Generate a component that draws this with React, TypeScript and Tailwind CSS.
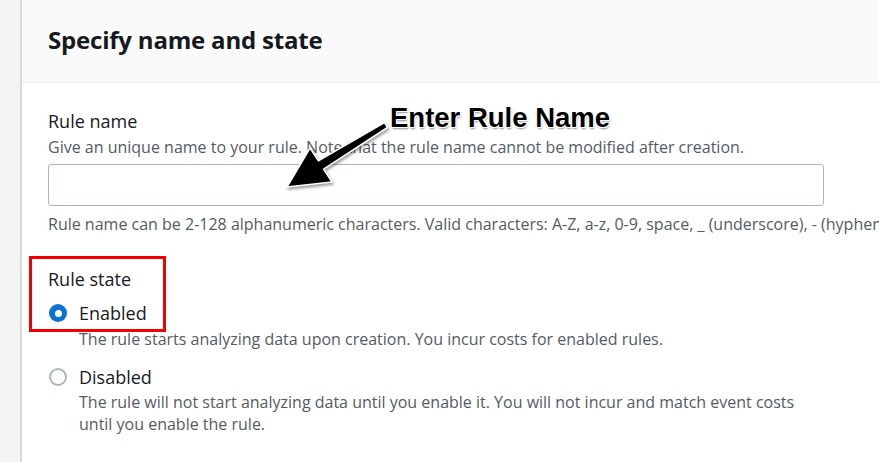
import React from 'react';

const font = { fontFamily: '"Open Sans", "Noto Sans", Arial, sans-serif' };

function Radio({ checked }: { checked: boolean }) {
  if (checked) {
    return (
      <span className="flex h-[18px] w-[18px] shrink-0 items-center justify-center rounded-full bg-[#0972d3]">
        <span className="h-[7px] w-[7px] rounded-full bg-white" />
      </span>
    );
  }
  return <span className="h-[18px] w-[18px] shrink-0 rounded-full border-2 border-[#aab7b8] bg-white" />;
}

export default function App() {
  return (
    <div className="relative flex h-[462px] w-[879px] overflow-hidden bg-[#f2f3f3]" style={font}>
      <div className="w-[20px] shrink-0" />
      <div className="flex min-w-0 flex-1 flex-col border-l-2 border-[#d5dbdb] bg-white">
        {/* header */}
        <div className="flex h-[83px] shrink-0 items-center border-b border-[#eaeded] bg-[#fafafa] pb-[2px] pl-[26px]">
          <h2 className="text-[24px] font-bold leading-none tracking-[-0.2px] text-[#16191f]">Specify name and state</h2>
        </div>

        <div className="flex flex-col pl-[26px] pt-[27px] text-[#16191f]">
          <div className="text-[18px] leading-[22px]">Rule name</div>
          <div className="mt-[4px] whitespace-nowrap text-[16px] leading-[22px] text-[#545b64]">
            Give an unique name to your rule. Note that the rule name cannot be modified after creation.
          </div>
          <div className="mt-[6px] h-[42px] w-[776px] rounded-[3px] border border-[#aab7b8] bg-white" />
          <div className="mt-[7px] whitespace-nowrap text-[16px] leading-[22px] text-[#545b64]">
            Rule name can be 2-128 alphanumeric characters. Valid characters: A-Z, a-z, 0-9, space, _ (underscore), - (hyphen)
          </div>

          <div className="mt-[33px] text-[18px] leading-[22px]">Rule state</div>
          <div className="mt-[12px] flex items-center gap-[12px] pl-[1px]">
            <Radio checked />
            <span className="text-[18px] leading-[22px]">Enabled</span>
          </div>
          <div className="mt-[4px] pl-[31px] text-[16px] leading-[22px] text-[#545b64]">
            The rule starts analyzing data upon creation. You incur costs for enabled rules.
          </div>
          <div className="mt-[16px] flex items-center gap-[12px] pl-[1px]">
            <Radio checked={false} />
            <span className="text-[18px] leading-[22px]">Disabled</span>
          </div>
          <div className="mt-[3px] w-[770px] pl-[31px] text-[16px] leading-[22px] text-[#545b64]">
            The rule will not start analyzing data until you enable it. You will not incur and match event costs until you enable the rule.
          </div>
        </div>
      </div>

      {/* annotations */}
      <div className="absolute left-[29px] top-[256px] h-[76px] w-[137px] border-[3px] border-[#f20000]" />
      <div
        className="absolute left-[390px] top-[104px] text-[27.5px] font-bold leading-none text-black"
        style={{
          fontFamily: '"Liberation Sans", Arial, sans-serif',
          textShadow:
            '1px 0 0 #fff, -1px 0 0 #fff, 0 1px 0 #fff, 0 -1px 0 #fff, 1px 1px 0 #fff, -1px -1px 0 #fff, 1px -1px 0 #fff, -1px 1px 0 #fff, 1px 2px 2px rgba(0,0,0,0.45)',
        }}
      >
        Enter Rule Name
      </div>
      <svg className="absolute left-0 top-0" width="879" height="462" viewBox="0 0 879 462" style={{ filter: 'drop-shadow(1px 2px 1.5px rgba(0,0,0,0.4))' }}>
        <polygon
          points="384.5,122.5 318.4,160.8 310,148 287,187 332,182 323.6,169.2 387.5,127.5"
          fill="#000"
          stroke="#fff"
          strokeWidth="1.5"
          strokeLinejoin="round"
        />
      </svg>
    </div>
  );
}
